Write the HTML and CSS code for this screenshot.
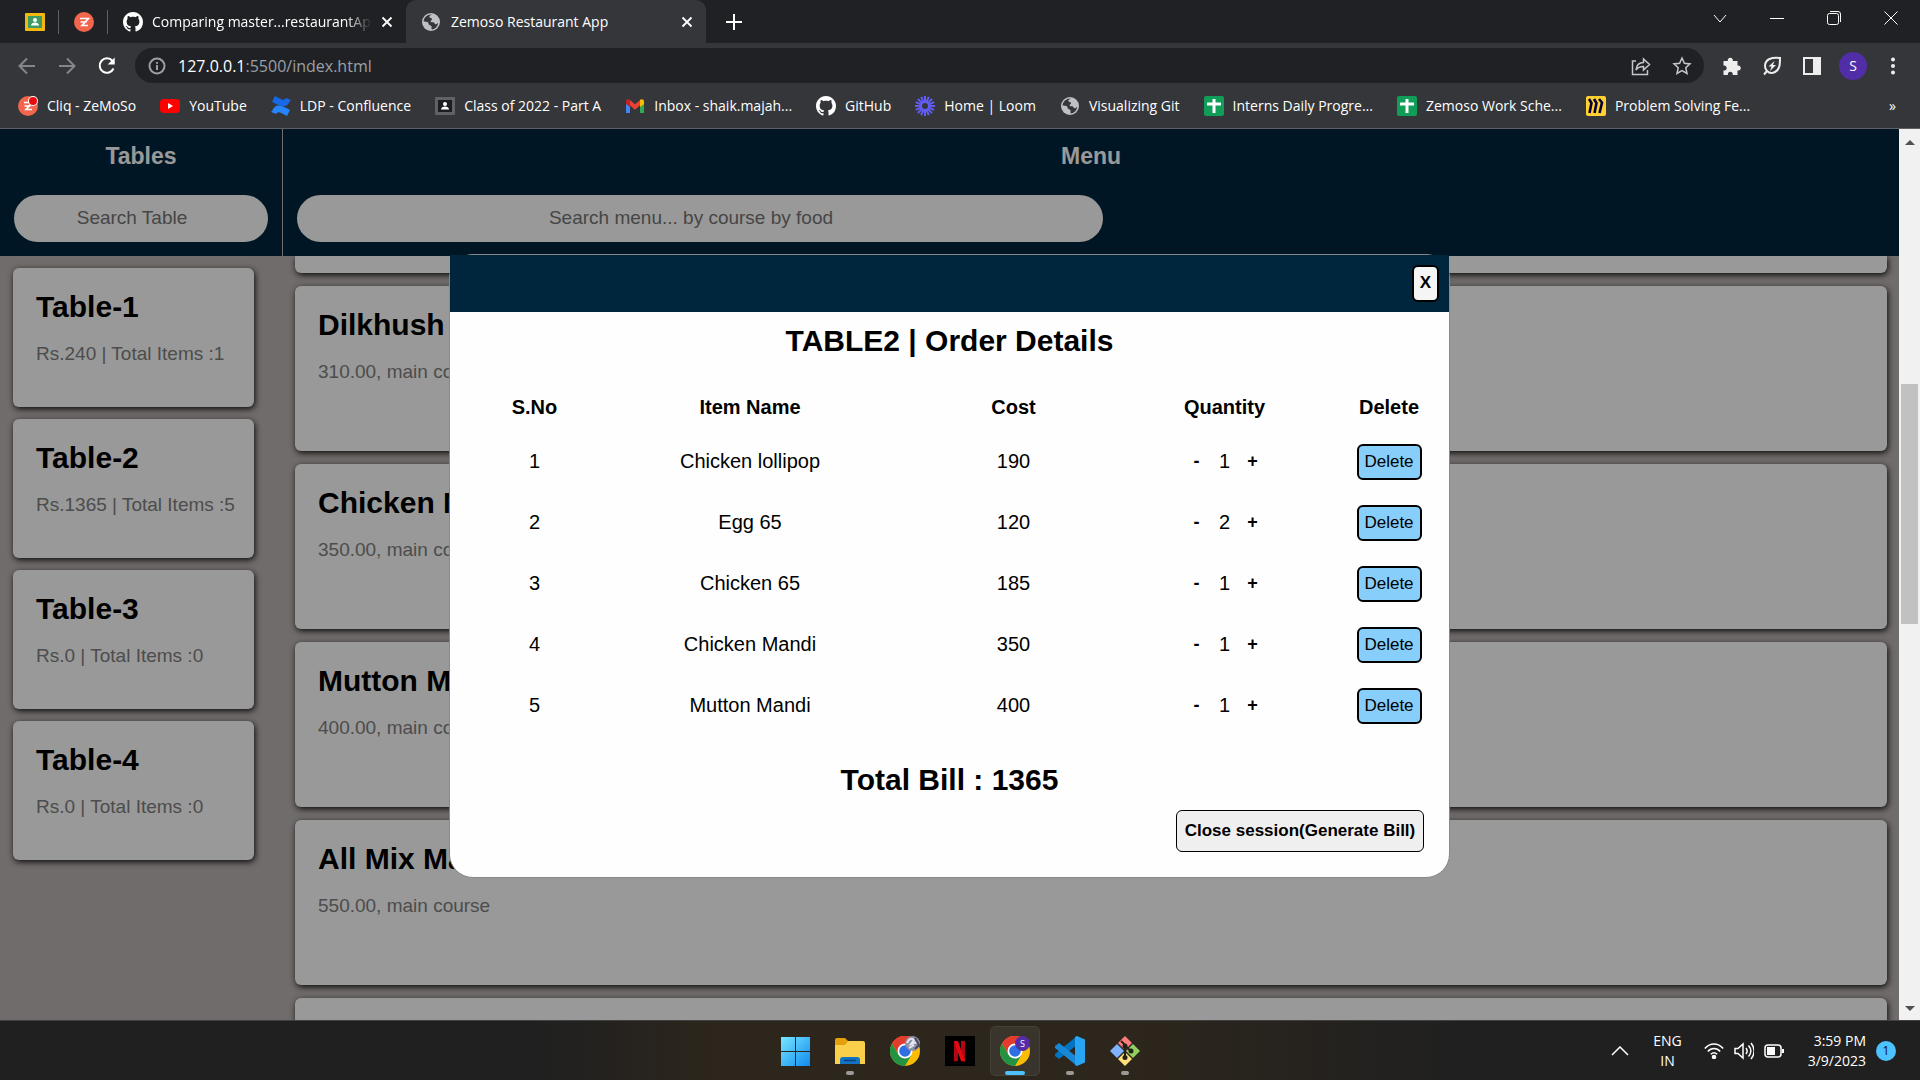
FILE: index.html
```
<!DOCTYPE html>
<html lang="en">
<head>
<meta charset="utf-8">
<title>Zemoso Restaurant App</title>
<link rel="stylesheet" href="styles.css">
</head>
<body>
<svg class="defs" aria-hidden="true">
  <symbol id="github" viewBox="0 0 16 16"><path fill="#fff" d="M8 0C3.58 0 0 3.58 0 8c0 3.54 2.29 6.53 5.47 7.59.4.07.55-.17.55-.38 0-.19-.01-.82-.01-1.49-2.01.37-2.53-.49-2.69-.94-.09-.23-.48-.94-.82-1.13-.28-.15-.68-.52-.01-.53.63-.01 1.08.58 1.23.82.72 1.21 1.87.87 2.33.66.07-.52.28-.87.51-1.07-1.78-.2-3.64-.89-3.64-3.95 0-.87.31-1.59.82-2.15-.08-.2-.36-1.02.08-2.12 0 0 .67-.21 2.2.82.64-.18 1.32-.27 2-.27s1.36.09 2 .27c1.53-1.04 2.2-.82 2.2-.82.44 1.1.16 1.92.08 2.12.51.56.82 1.27.82 2.15 0 3.07-1.87 3.75-3.65 3.95.29.25.54.73.54 1.48 0 1.07-.01 1.93-.01 2.2 0 .21.15.46.55.38A8.01 8.01 0 0 0 16 8c0-4.42-3.58-8-8-8z"/></symbol>
  <symbol id="globe" viewBox="0 0 20 20"><circle cx="10" cy="10" r="9" fill="#bdc1c6"/><path fill="#35363a" d="M11 2.6c-1 1-3 .8-2.600 2.400.3 1.300 2.500.6 2.600 2.200.1 1.200-1.500 1-1.400 2.200.1 1 1.800.6 2.800.8 1.300.3 1 1.800 2.200 2 1 .2 1.800-.8 2.600-1.400a7.400 7.400 0 0 1-6.400 6.600c-.6-1-.2-1.800-.2-2.800 0-1.400-2-1.200-2.800-2.200-.6-.8 0-1.600-.8-2.200C6 9.500 4 9.600 2.600 9.400 2.900 5.600 6.500 2.200 11 2.600z"/></symbol>
  <symbol id="sheet" viewBox="0 0 20 20"><rect width="20" height="20" rx="2" fill="#0f9d58"/><path d="M10 3v14M3 8h14" stroke="#fff" stroke-width="3"/></symbol>
  <symbol id="cross" viewBox="0 0 12 12"><path d="M1.500 1.500l9 9M10.500 1.500l-9 9" stroke="#fff" stroke-width="1.800"/></symbol>
  <symbol id="chrome" viewBox="0 0 30 30"><circle cx="15" cy="15" r="15" fill="#fbbc05"/><path d="M15 15L2 7.500A15 15 0 0 1 28 7.500H15z" fill="#ea4335"/><path d="M15 0a15 15 0 0 1 13 7.500H15L8.500 18.800 2 7.500A15 15 0 0 1 15 0z" fill="#e33b2e"/><path d="M2 7.500A15 15 0 0 0 15 30l6.500-11.200L15 22l-6.500-3.200z" fill="#229342"/><circle cx="15" cy="15" r="7.500" fill="#fff"/><circle cx="15" cy="15" r="5.800" fill="#2f6fe4"/></symbol>
  <symbol id="zed" viewBox="0 0 20 20"><circle cx="10" cy="10" r="10" fill="#f1664c"/><path d="M6 6.500h8.500l-6.500 7h6M6.500 10h6" fill="none" stroke="#fff" stroke-width="1.600"/></symbol>
</svg>

<header class="browser">
  <div class="tabs">
    <button class="pinned" aria-label="Classroom"><svg width="20" height="18" viewBox="0 0 20 18"><rect width="20" height="18" rx="1" fill="#f4b90f"/><rect x="3" y="3" width="14" height="12" fill="#3f9b62"/><circle cx="10" cy="7" r="2" fill="#fff"/><path d="M6 12.500c0-4 8-4 8 0z" fill="#fff"/></svg></button>
    <button class="pinned" aria-label="Cliq"><svg width="20" height="20"><use href="#zed"/></svg></button>
    <div class="tab"><svg width="20" height="20"><use href="#github"/></svg><span class="tab-name fade">Comparing master...restaurantAp</span><button aria-label="Close tab"><svg width="12" height="12"><use href="#cross"/></svg></button></div>
    <div class="tab active"><svg width="20" height="20"><use href="#globe"/></svg><span class="tab-name">Zemoso Restaurant App</span><button aria-label="Close tab"><svg width="12" height="12"><use href="#cross"/></svg></button></div>
    <button class="new-tab" aria-label="New tab"><svg width="16" height="16" viewBox="0 0 16 16"><path d="M8 0v16M0 8h16" stroke="#fff" stroke-width="2"/></svg></button>
    <div class="window-controls">
      <button aria-label="Search tabs"><svg width="14" height="14" viewBox="0 0 14 14"><path d="M1 4l6 7 6-7"/></svg></button>
      <button aria-label="Minimize"><svg width="14" height="14" viewBox="0 0 14 14"><path d="M0 7.500h14"/></svg></button>
      <button aria-label="Restore"><svg width="14" height="14" viewBox="0 0 14 14"><rect x=".5" y="2.500" width="11" height="11" rx="2"/><path d="M3 .5h8a2.500 2.500 0 0 1 2.500 2.500v8"/></svg></button>
      <button aria-label="Close"><svg width="14" height="14" viewBox="0 0 14 14"><path d="M.5.500l13 13M13.500.500l-13 13"/></svg></button>
    </div>
  </div>
  <div class="toolbar">
    <button aria-label="Back"><svg width="20" height="18" viewBox="0 0 20 18" class="dim"><path d="M18 9H3M10 1.500L2.500 9l7.500 7.500"/></svg></button>
    <button aria-label="Forward"><svg width="20" height="18" viewBox="0 0 20 18" class="dim"><path d="M2 9h15M10 1.500L17.500 9 10 16.500"/></svg></button>
    <button aria-label="Reload"><svg width="20" height="20" viewBox="0 0 20 20" class="bright"><path d="M16.500 12.500A7.200 7.200 0 1 1 15.500 5L17 7"/><path d="M17.700 1.500v7h-7z" fill="#fff" stroke="none"/></svg></button>
    <div class="address">
      <svg width="18" height="18" viewBox="0 0 18 18" class="info"><circle cx="9" cy="9" r="7.500"/><path d="M9 8v5M9 5v1.800"/></svg>
      <span class="url"><b>127.0.0.1</b>:5500/index.html</span>
      <button aria-label="Share"><svg width="20" height="20" viewBox="0 0 20 20" class="lines"><path d="M5 5H1.500v13.500h15V14M5 14c.5-5 3.500-7.500 7.500-7.500V3l6 5.500-6 5.500v-3.500c-3 0-5.500.5-7.500 3.500z"/></svg></button>
      <button aria-label="Bookmark"><svg width="20" height="20" viewBox="0 0 20 20" class="lines"><path d="M10 2l2.400 5.300 5.600.6-4.200 3.900 1.200 5.700-5-2.900-5 2.900 1.200-5.700L2 7.900l5.600-.6z"/></svg></button>
    </div>
    <div class="extensions">
      <button aria-label="Extensions"><svg width="20" height="20" viewBox="0 0 20 20"><path fill="#eee" d="M1.500 5h4.300a2.600 2.600 0 1 1 5 0h4.700v4.500a2.600 2.600 0 1 1 0 5V19h-4.800a2.500 2.500 0 1 0-4.800 0H1.500v-4.700a2.500 2.500 0 1 0 0-4.800z"/></svg></button>
      <button aria-label="Energy saver"><svg width="20" height="20" viewBox="0 0 20 20" class="leaf"><path d="M18 2c-8-1-15 1-15 8 0 2 1 4 2 5 2 2 5 2.500 8 1 5-2.500 5-8 5-14zM2 18.500l3-3.500"/><path d="M12.500 5l-6 5.500h3L8 15l6-6h-3z" fill="#eee" stroke="none"/></svg></button>
      <button aria-label="Side panel"><svg width="20" height="18" viewBox="0 0 20 18"><path fill="#eee" fill-rule="evenodd" d="M1 0h18v18H1zM3 2v14h8V2z"/></svg></button>
      <button class="avatar">S</button>
      <button aria-label="Menu"><svg width="6" height="18" viewBox="0 0 6 18" fill="#eee"><circle cx="3" cy="2.500" r="2"/><circle cx="3" cy="9" r="2"/><circle cx="3" cy="15.500" r="2"/></svg></button>
    </div>
  </div>
  <nav class="bookmarks">
    <a href="#"><svg width="20" height="20" viewBox="0 0 20 20"><use href="#zed"/><circle cx="15" cy="5" r="5" fill="#fff"/><circle cx="15" cy="5" r="4" fill="#e80c0c"/></svg>Cliq - ZeMoSo</a>
    <a href="#"><svg width="20" height="20" viewBox="0 0 20 20"><rect y="3" width="20" height="14" rx="4" fill="#f00"/><path d="M8 7v6l5-3z" fill="#fff"/></svg>YouTube</a>
    <a href="#"><svg width="20" height="20" viewBox="0 0 20 20"><path d="M1 15c4-8 8-6 18-1l-3 6C9 16 7 15 5 18L0 16z" fill="#2684ff"/><path d="M19 5C15 13 11 11 1 6l3-6c7 4 9 5 11 2l5 2z" fill="#1868e5"/></svg>LDP - Confluence</a>
    <a href="#"><svg width="20" height="18" viewBox="0 0 20 18"><rect width="20" height="18" rx="1" fill="#5f6368"/><rect x="3" y="3" width="14" height="12" fill="#1c1d20"/><circle cx="10" cy="7" r="2" fill="#fff"/><path d="M6 12.500c0-4 8-4 8 0z" fill="#fff"/></svg>Class of 2022 - Part A</a>
    <a href="#"><svg width="20" height="20" viewBox="0 0 20 20"><path d="M1 5v12h4V8z" fill="#4285f4"/><path d="M19 5v12h-4V8z" fill="#34a853"/><path d="M3 5l7 6 7-6" fill="none" stroke="#ea4335" stroke-width="4"/><path d="M15 6.700V11l4-3V5.500C19 3 16.500 2.600 15 4z" fill="#fbbc04"/><path d="M5 6.700V11L1 8V5.500C1 3 3.500 2.600 5 4z" fill="#c5221f"/></svg>Inbox - shaik.majah...</a>
    <a href="#"><svg width="20" height="20"><use href="#github"/></svg>GitHub</a>
    <a href="#"><svg width="20" height="20" viewBox="0 0 20 20"><g stroke="#625df5" stroke-width="2"><path d="M10 0v20M0 10h20M2.900 2.900l14.200 14.200M17.100 2.900L2.900 17.100M6.200.8l7.600 18.400M13.800.8L6.200 19.200M.8 6.200l18.400 7.600M19.200 6.200L.8 13.800"/></g><circle cx="10" cy="10" r="3" fill="#35363a"/></svg>Home | Loom</a>
    <a href="#"><svg width="20" height="20"><use href="#globe"/></svg>Visualizing Git</a>
    <a href="#"><svg width="20" height="20"><use href="#sheet"/></svg>Interns Daily Progre...</a>
    <a href="#"><svg width="20" height="20"><use href="#sheet"/></svg>Zemoso Work Sche...</a>
    <a href="#"><svg width="20" height="20" viewBox="0 0 20 20"><rect width="20" height="20" rx="2" fill="#ffd02f"/><path d="M3 3l2.500 4-2 10M8 3l2.500 4-2 10M13 3l3 3.500L13.500 17" fill="none" stroke="#050038" stroke-width="2.600"/></svg>Problem Solving Fe...</a>
    <button class="more">»</button>
  </nav>
</header>

<div class="viewport">
  <div class="page">
    <div class="topbar">
      <section class="top-tables"><h3>Tables</h3><input class="search" type="text" placeholder="Search Table" aria-label="Search Table"></section>
      <section class="top-menu"><h3>Menu</h3><input class="search wide" type="text" placeholder="Search menu... by course by food" aria-label="Search menu"></section>
    </div>
    <div class="lists">
      <div class="table-list">
        <article class="card"><h2>Table-1</h2><p>Rs.240 | Total Items :1</p></article>
        <article class="card"><h2>Table-2</h2><p>Rs.1365 | Total Items :5</p></article>
        <article class="card"><h2>Table-3</h2><p>Rs.0 | Total Items :0</p></article>
        <article class="card"><h2>Table-4</h2><p>Rs.0 | Total Items :0</p></article>
      </div>
      <div class="menu-list">
        <article class="card tail"></article>
        <article class="card"><h2>Dilkhush</h2><p>310.00, main course</p></article>
        <article class="card"><h2>Chicken Mandi</h2><p>350.00, main course</p></article>
        <article class="card"><h2>Mutton Mandi</h2><p>400.00, main course</p></article>
        <article class="card"><h2>All Mix Mandi</h2><p>550.00, main course</p></article>
        <article class="card"></article>
      </div>
    </div>
    <div class="backdrop">
      <div class="modal" role="dialog" aria-labelledby="order-title">
        <div class="modal-head"><button class="close">X</button></div>
        <h2 id="order-title">TABLE2 | Order Details</h2>
        <table>
          <colgroup><col class="c-no"><col class="c-name"><col class="c-cost"><col class="c-qty"><col></colgroup>
          <thead><tr><th>S.No</th><th>Item Name</th><th>Cost</th><th>Quantity</th><th>Delete</th></tr></thead>
          <tbody>
            <tr><td>1</td><td>Chicken lollipop</td><td>190</td><td><div class="qty"><button>-</button>1<button>+</button></div></td><td><button class="delete">Delete</button></td></tr>
            <tr><td>2</td><td>Egg 65</td><td>120</td><td><div class="qty"><button>-</button>2<button>+</button></div></td><td><button class="delete">Delete</button></td></tr>
            <tr><td>3</td><td>Chicken 65</td><td>185</td><td><div class="qty"><button>-</button>1<button>+</button></div></td><td><button class="delete">Delete</button></td></tr>
            <tr><td>4</td><td>Chicken Mandi</td><td>350</td><td><div class="qty"><button>-</button>1<button>+</button></div></td><td><button class="delete">Delete</button></td></tr>
            <tr><td>5</td><td>Mutton Mandi</td><td>400</td><td><div class="qty"><button>-</button>1<button>+</button></div></td><td><button class="delete">Delete</button></td></tr>
          </tbody>
        </table>
        <h2 class="total">Total Bill : 1365</h2>
        <div class="actions"><button class="generate">Close session(Generate Bill)</button></div>
      </div>
    </div>
  </div>
  <div class="scrollbar"><i class="arrow up"></i><div class="track"><div class="thumb"></div></div><i class="arrow down"></i></div>
</div>

<footer class="taskbar">
  <div class="apps">
    <button aria-label="Start"><svg width="30" height="30" viewBox="0 0 30 30"><defs><linearGradient id="win" x1="0" y1="0" x2="30" y2="30" gradientUnits="userSpaceOnUse"><stop stop-color="#7beaff"/><stop offset="1" stop-color="#0f8bf0"/></linearGradient></defs><path fill="url(#win)" d="M1 1h14v14H1zM16 1h14v14H16zM1 16h14v14H1zM16 16h14v14H16z"/></svg></button>
    <button class="open" aria-label="File Explorer"><svg width="30" height="30" viewBox="0 0 30 30"><path d="M0 4a2 2 0 0 1 2-2h8l3 3v5H0z" fill="#e5a00d"/><path d="M0 9h10l3-4h15a2 2 0 0 1 2 2v21H0z" fill="#fccf4b"/><path d="M5 28v-4a3 3 0 0 1 3-3h14a3 3 0 0 1 3 3v4z" fill="#1272c4"/><path d="M9 24.500h12" stroke="#0b3f78" stroke-width="1.500"/></svg></button>
    <button aria-label="Chrome"><svg width="30" height="30" viewBox="0 0 30 30"><use href="#chrome"/><circle cx="22.500" cy="7.500" r="7.500" fill="#8c8fa5"/><path d="M17 7c2-5 5-5 7-3l-3 4 6-2M19 12l5-3" fill="none" stroke="#e8e8f2" stroke-width="2"/><path d="M25 2l4 7-4 4" fill="none" stroke="#454560" stroke-width="2"/></svg></button>
    <button aria-label="Netflix"><svg width="30" height="30" viewBox="0 0 30 30"><rect width="30" height="30" fill="#000"/><path d="M9 5h4v20l-4 .5zM16 5h4v20.500l-4-.5z" fill="#b20710"/><path d="M9 5h4l7 20.500-4-.5z" fill="#e50914"/></svg></button>
    <button class="open current" aria-label="Chrome, current window"><svg width="30" height="30" viewBox="0 0 30 30"><use href="#chrome"/><circle cx="22.500" cy="7.500" r="7.500" fill="#512da8"/><text x="22.500" y="11" class="badge-letter">S</text></svg></button>
    <button class="open" aria-label="Visual Studio Code"><svg width="30" height="30" viewBox="0 0 30 30"><path d="M22 0v9L4 23 0 20v-2z" fill="#0074c0"/><path d="M22 30v-9L4 7 0 10v2z" fill="#1787d6"/><path d="M22 0l8 3.500v23L22 30l-2-1V1z" fill="#29a4f2"/></svg></button>
    <button class="open" aria-label="Git Bash"><svg width="30" height="30" viewBox="0 0 30 30"><path d="M15 0l7 7-7 7-7-7z" fill="#ff7b7b"/><path d="M7 8l7 7-7 7-7-7z" fill="#7fb2ff"/><path d="M23 8l7 7-7 7-7-7z" fill="#8fd05f"/><path d="M15 16l7 7-7 7-7-7z" fill="#ffe07a"/><path d="M11 5l4 4v13M15 10l6 5" stroke="#222019" stroke-width="2" fill="none"/><circle cx="15" cy="10" r="2.500" fill="#222019"/><circle cx="21" cy="15" r="2.500" fill="#222019"/><circle cx="15" cy="21.500" r="2.500" fill="#222019"/></svg></button>
  </div>
  <div class="tray">
    <svg width="18" height="10" viewBox="0 0 18 10"><path d="M1 9l8-8 8 8"/></svg>
    <div class="lang">ENG<br>IN</div>
    <svg width="20" height="16" viewBox="0 0 20 16"><path d="M.8 5.500C6-.5 14-.5 19.200 5.500M3.800 8.500c3.500-4 8.900-4 12.400 0M6.800 11.300c2-2 4.400-2 6.400 0"/><circle cx="10" cy="14" r="1.500" fill="#fff"/></svg>
    <svg width="20" height="18" viewBox="0 0 20 18"><path d="M1 6.500h3l5-4.500v14l-5-4.500H1zM12 6c1.500 2 1.500 4 0 6M14.500 3.500c3 3.500 3 7.500 0 11M17 1c4 5 4 11 0 16"/></svg>
    <svg width="20" height="14" viewBox="0 0 20 14"><rect x="1" y="1" width="16" height="12" rx="3"/><path d="M3 3h8v8H3z" fill="#fff" stroke="none"/><path d="M19 5v4" stroke-width="2"/></svg>
    <div class="clock">3:59 PM<br>3/9/2023</div>
    <span class="count">1</span>
  </div>
</footer>
</body>
</html>
```
FILE: styles.css
```
* { box-sizing: border-box; }
body {
  margin: 0;
  height: 100vh;
  display: flex;
  flex-direction: column;
  overflow: hidden;
  font-family: "Liberation Sans", Arial, sans-serif;
}
h2, h3, p { margin: 0; }
button { font: inherit; color: inherit; padding: 0; border: 0; background: none; }
svg { display: block; flex: none; }
.defs { position: absolute; width: 0; height: 0; }

/* Browser chrome */
.browser {
  flex: none;
  background: #35363a;
  border-bottom: 1px solid #5f6064;
  color: #fff;
  font: 14px/20px "Open Sans", "Noto Sans", sans-serif;
}
.tabs { display: flex; height: 43px; background: #202124; padding-left: 10px; }
.pinned {
  width: 49px;
  display: flex;
  align-items: center;
  justify-content: center;
  background: linear-gradient(#5f6064, #5f6064) right center / 1px 24px no-repeat;
}
.tab { width: 298px; display: flex; align-items: center; gap: 9px; padding: 0 13px 0 15px; }
.tab.active { width: 300px; gap: 10px; background: #35363a; border-radius: 10px 10px 0 0; }
.tab-name { flex: 1; white-space: nowrap; }
.fade { mask-image: linear-gradient(90deg, #000 88%, transparent); }
.new-tab { padding: 0 20px; }
.window-controls { margin-left: auto; display: flex; height: 36px; gap: 43px; padding-right: 22px; }
.window-controls svg { fill: none; stroke: #fff; stroke-width: 1; }
.toolbar { display: flex; align-items: center; height: 45px; padding: 0 24px 0 17px; }
.toolbar > button { width: 20px; margin-right: 20px; }
.toolbar > button:nth-child(3) { margin-right: 18px; }
.toolbar svg { margin: auto; }
.dim, .bright, .info, .lines, .leaf { fill: none; stroke: #85868a; stroke-width: 2; }
.bright { stroke: #fff; }
.info { stroke: #9aa0a6; }
.lines { stroke: #c4c7c9; stroke-width: 1.500; }
.leaf { stroke: #eee; }
.address {
  flex: 1;
  display: flex;
  align-items: center;
  height: 35px;
  padding: 0 12px 0 13px;
  border-radius: 18px;
  background: #202124;
  gap: 21px;
}
.address .info { margin: 0; }
.url { flex: 1; margin-left: -9px; font-size: 16px; color: #9aa0a6; }
.url b { color: #fff; font-weight: 400; }
.extensions { display: flex; align-items: center; gap: 20px; padding-left: 18px; }
.avatar { width: 28px; height: 28px; margin: 0 3px 0 -3px; border-radius: 50%; background: #512da8; }
.bookmarks { display: flex; align-items: center; gap: 24px; height: 40px; padding: 0 24px 4px 18px; }
.bookmarks a { display: flex; align-items: center; gap: 9px; color: #fff; text-decoration: none; white-space: nowrap; }
.more { margin-left: auto; }

/* Restaurant page */
.viewport { flex: 1; min-height: 0; display: flex; }
.page { flex: 1; position: relative; display: flex; flex-direction: column; background: #bbb4b2; overflow: hidden; }
.topbar, .lists { display: grid; grid-template-columns: 283px 1fr; }
.topbar { background: #00263c; color: #fff; }
.topbar section { display: flex; flex-direction: column; padding: 14px 14px; }
.top-tables { border-right: 1px solid #bbb; }
.topbar h3 { font-size: 23px; line-height: 26px; text-align: center; margin-bottom: 26px; }
.search {
  height: 47px;
  padding: 0 18px 2px 0;
  border: 0;
  border-radius: 24px;
  background: #fff;
  font: 19px "Liberation Sans", Arial, sans-serif;
  text-align: center;
}
.search.wide { width: calc(50% + 12px); }
.lists { flex: 1; min-height: 0; }
.table-list, .menu-list { display: flex; flex-direction: column; gap: 12px; padding: 12px 29px 0 13px; }
.menu-list { gap: 13px; padding: 0 12px; overflow: hidden; }
.card {
  flex: none;
  height: 139px;
  padding: 22px 23px;
  border-radius: 6px;
  background: #fff;
  box-shadow: 1px 2px 6px rgba(0, 0, 0, 0.9);
  white-space: nowrap;
}
.menu-list .card { height: 165px; }
.menu-list .tail { height: 17px; padding: 0; border-radius: 0 0 6px 6px; }
.card h2 { font-size: 30px; line-height: 34px; margin-bottom: 19px; }
.card p { font-size: 19px; line-height: 22px; color: #808080; }

/* Order dialog */
.backdrop {
  position: absolute;
  inset: 0;
  display: flex;
  justify-content: center;
  align-items: flex-start;
  padding-top: 125px;
  background: rgba(0, 0, 0, 0.4);
}
.modal { width: 1001px; background: #fefefe; border: 1px solid #888; border-radius: 24px; padding-bottom: 25px; font-size: 20px; }
.modal-head { display: flex; justify-content: flex-end; padding: 10px; background: #00263d; }
.close { width: 27px; height: 37px; padding-bottom: 2px; border: 2px solid #000; border-radius: 6px; background: #f5f5f5; font-size: 17px; font-weight: 700; }
.modal h2 { margin-top: 12px; font-size: 30px; line-height: 34px; text-align: center; }
.modal table { width: 973px; margin: 25px 0 0 auto; table-layout: fixed; border-collapse: collapse; text-align: center; }
.c-no { width: 117px; }
.c-name { width: 314px; }
.c-cost { width: 213px; }
.c-qty { width: 209px; }
.modal th { height: 48px; padding: 0; }
.modal td { height: 61px; padding: 0; }
.qty { display: flex; justify-content: center; align-items: center; gap: 6px; }
.qty button { width: 33px; font-size: 18px; font-weight: 700; }
.delete { width: 65px; height: 36px; border: 2px solid #000; border-radius: 6px; background: #87cefa; font-size: 17px; }
.modal .total { margin: 27px 0 13px; }
.actions { display: flex; justify-content: flex-end; padding-right: 25px; }
.generate { width: 248px; height: 42px; border: 1px solid #000; border-radius: 6px; background: #efefef; font-size: 17px; font-weight: 700; }

.scrollbar { width: 21px; display: flex; flex-direction: column; align-items: center; padding: 9px 0 7px; background: #f1f1f1; }
.arrow { border: 5px solid transparent; }
.up { border-top: 0; border-bottom-color: #505050; }
.down { border-bottom: 0; border-top-color: #505050; }
.up, .down { margin: 2px 0; }
.track { flex: 1; width: 17px; padding-top: 237px; }
.thumb { height: 240px; background: #c1c1c1; }

/* Desktop taskbar */
.taskbar {
  flex: none;
  height: 60px;
  display: grid;
  grid-template-columns: 1fr auto 1fr;
  align-items: center;
  border-top: 1px solid #404040;
  background: linear-gradient(90deg, #202020 28%, #2d261c 38%, #2d261c 58%, #202020 76%);
  color: #fff;
  font: 14px/20px "Open Sans", "Noto Sans", sans-serif;
}
.apps { grid-column: 2; display: flex; gap: 5px; }
.apps button { position: relative; width: 50px; height: 50px; display: flex; align-items: center; justify-content: center; border-radius: 5px; }
.apps .current { background: #3a352c; border: 1px solid #454037; }
.open::after { content: ""; position: absolute; bottom: 1px; width: 8px; height: 4px; border-radius: 2px; background: #9c9a97; }
.current::after { width: 20px; bottom: 0; background: #4cc2ff; }
.badge-letter { font-size: 9px; fill: #fff; text-anchor: middle; }
.tray { display: flex; align-items: center; justify-content: flex-end; gap: 10px; padding-right: 24px; }
.tray svg { fill: none; stroke: #fff; stroke-width: 1.500; }
.lang { margin: 0 12px 0 14px; text-align: center; }
.clock { margin-left: 14px; text-align: right; }
.count { width: 20px; height: 20px; border-radius: 50%; background: #4cc2ff; color: #111; text-align: center; font-size: 12px; }
```
